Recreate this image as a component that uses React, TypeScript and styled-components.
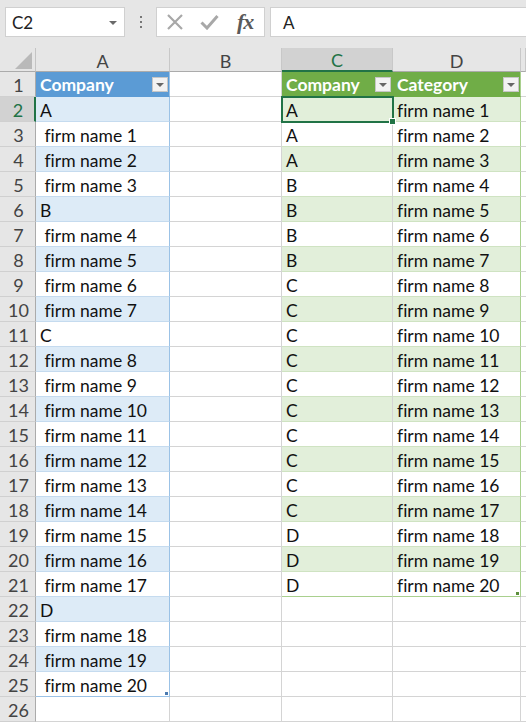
import React from "react";
import styled, { createGlobalStyle, css } from "styled-components";

const Global = createGlobalStyle`
  html, body { margin: 0; padding: 0; background: #ffffff; }
  body {
    font-family: Lato, "Open Sans", sans-serif;
    overflow: hidden;
    font-variant-ligatures: none;
    font-feature-settings: "liga" 0, "clig" 0;
  }
`;

const Page = styled.div`
  width: 526px;
  height: 723px;
  overflow: hidden;
  background: #fff;
`;

const TopBar = styled.div`
  height: 48px;
  box-sizing: border-box;
  background: #e6e6e6;
  display: flex;
  align-items: flex-start;
  padding: 7px 0 0 5px;
`;

const NameBox = styled.div`
  width: 120px;
  height: 30px;
  box-sizing: border-box;
  background: #fff;
  border: 1px solid #d0d0d0;
  display: flex;
  align-items: center;
  justify-content: space-between;
  padding: 1px 7px 0 6px;
  font-size: 17px;
  color: #222;
`;

const Caret = styled.span`
  width: 0;
  height: 0;
  border-left: 4px solid transparent;
  border-right: 4px solid transparent;
  border-top: 4px solid #6a6a6a;
`;

const Dots = styled.div`
  width: 31px;
  height: 30px;
  display: flex;
  flex-direction: column;
  align-items: center;
  justify-content: center;
  gap: 3px;
  span {
    width: 2px;
    height: 2px;
    background: #777;
  }
`;

const IconBox = styled.div`
  width: 109px;
  height: 30px;
  box-sizing: border-box;
  background: #fff;
  border: 1px solid #d0d0d0;
  display: flex;
  align-items: center;
  padding-left: 9px;
  gap: 16px;
`;

const Fx = styled.span`
  font-family: "Liberation Serif", "DejaVu Serif", serif;
  font-style: italic;
  font-weight: 700;
  font-size: 22px;
  color: #5a5a5a;
  margin-left: 2px;
  letter-spacing: -1px;
  line-height: 1;
`;

const FormulaInput = styled.div`
  flex: 1;
  height: 30px;
  margin-left: 5px;
  box-sizing: border-box;
  background: #fff;
  border: 1px solid #d0d0d0;
  border-right: none;
  display: flex;
  align-items: center;
  padding: 1px 0 0 12px;
  font-size: 17px;
  color: #222;
`;

const Sheet = styled.div`
  display: grid;
  grid-template-columns: 36px 134px 112px 111px 128px 5px;
  grid-template-rows: 24px;
  grid-auto-rows: 25px;
  font-size: 17.5px;
`;

const Corner = styled.div`
  background: #e6e6e6;
  border-right: 1px solid #c4c4c4;
  border-bottom: 1px solid #ababab;
  box-sizing: border-box;
  display: flex;
  align-items: flex-end;
  justify-content: flex-end;
  padding: 0 3px 2px 0;
  &::before {
    content: "";
    width: 0;
    height: 0;
    border-left: 17px solid transparent;
    border-bottom: 17px solid #b9b9b9;
  }
`;

const ColHead = styled.div<{ $sel?: boolean }>`
  box-sizing: border-box;
  background: ${(p) => (p.$sel ? "#d2d2d2" : "#e6e6e6")};
  color: ${(p) => (p.$sel ? "#217346" : "#444")};
  border-right: 1px solid #c8c8c8;
  border-bottom: ${(p) => (p.$sel ? "2px solid #217346" : "1px solid #ababab")};
  display: flex;
  align-items: center;
  justify-content: center;
  font-size: 18px;
  padding-top: 2px;
`;

const RowHead = styled.div<{ $sel?: boolean }>`
  box-sizing: border-box;
  background: ${(p) => (p.$sel ? "#d2d2d2" : "#e6e6e6")};
  color: ${(p) => (p.$sel ? "#217346" : "#444")};
  border-right: ${(p) => (p.$sel ? "2px solid #217346" : "1px solid #ababab")};
  border-bottom: 1px solid #d0d0d0;
  display: flex;
  align-items: center;
  justify-content: center;
  font-size: 18px;
  padding: 2px 0 0 2px;
`;

type Tone = "none" | "blue" | "green";

const palette = {
  blue: { head: "#5b9bd5", band: "#ddebf7", edge: "#9bc2e6", inner: "#c5dbef", handle: "#4a7ab0" },
  green: { head: "#70ad47", band: "#e2efda", edge: "#a9d08e", inner: "#cfe3c2", handle: "#5d8f3c" },
};

const Cell = styled.div<{
  $tone: Tone;
  $head?: boolean;
  $band?: boolean;
  $edgeRight?: boolean;
  $last?: boolean;
  $selected?: boolean;
  $handle?: boolean;
}>`
  position: relative;
  box-sizing: border-box;
  display: flex;
  align-items: center;
  justify-content: space-between;
  padding: 2px 1px 0 4px;
  white-space: pre;
  color: #111;
  background: #fff;
  border-right: 1px solid #d4d4d4;
  border-bottom: 1px solid #d4d4d4;
  ${(p) => {
    if (p.$tone === "none") return "";
    const c = palette[p.$tone];
    if (p.$head)
      return css`
        background: ${c.head};
        color: #fff;
        font-weight: 700;
        padding-top: 1px;
        border-bottom-color: ${c.head};
        border-right-color: ${p.$edgeRight ? c.edge : c.head};
      `;
    return css`
      background: ${p.$band ? c.band : "#fff"};
      border-bottom-color: ${p.$last ? c.edge : c.inner};
      border-right-color: ${p.$edgeRight ? c.edge : "#d4d4d4"};
    `;
  }}
  ${(p) =>
    p.$handle &&
    p.$tone !== "none" &&
    css`
      &::before {
        content: "";
        position: absolute;
        right: 1px;
        bottom: 1px;
        width: 3px;
        height: 3px;
        background: ${palette[p.$tone].handle};
      }
    `}
  ${(p) =>
    p.$selected &&
    css`
      z-index: 2;
      outline: 2px solid #217346;
      outline-offset: -1px;
      &::after {
        content: "";
        position: absolute;
        right: -4px;
        bottom: -4px;
        width: 5px;
        height: 5px;
        background: #217346;
        border: 1px solid #fff;
      }
    `}
`;

const FilterBtn = styled.span`
  width: 16px;
  height: 15px;
  box-sizing: border-box;
  background: #f2f2f2;
  border: 1px solid #c6c6c6;
  display: flex;
  align-items: center;
  justify-content: center;
  &::before {
    content: "";
    width: 0;
    height: 0;
    border-left: 4px solid transparent;
    border-right: 4px solid transparent;
    border-top: 4px solid #666;
  }
`;

const leftData: string[] = [
  "A", " firm name 1", " firm name 2", " firm name 3",
  "B", " firm name 4", " firm name 5", " firm name 6", " firm name 7",
  "C", " firm name 8", " firm name 9", " firm name 10", " firm name 11", " firm name 12",
  " firm name 13", " firm name 14", " firm name 15", " firm name 16", " firm name 17",
  "D", " firm name 18", " firm name 19", " firm name 20",
];

const rightCat: string[] = [
  "A", "A", "A", "B", "B", "B", "B",
  "C", "C", "C", "C", "C", "C", "C", "C", "C", "C",
  "D", "D", "D",
];

const XIcon = () => (
  <svg width="18" height="18" viewBox="0 0 18 18">
    <path d="M2 2 L16 16 M16 2 L2 16" stroke="#a8a8a8" strokeWidth="2.2" fill="none" />
  </svg>
);

const CheckIcon = () => (
  <svg width="19" height="16" viewBox="0 0 19 16">
    <path d="M1.5 8.5 L7 14 L17.5 2" stroke="#a8a8a8" strokeWidth="3" fill="none" />
  </svg>
);

export default function App() {
  const rows: React.ReactNode[] = [];
  for (let r = 1; r <= 26; r++) {
    const sel = r === 2;
    rows.push(
      <RowHead key={`rh${r}`} $sel={sel}>
        {r}
      </RowHead>
    );
    if (r === 1) {
      rows.push(
        <Cell key={`a${r}`} $tone="blue" $head $edgeRight>
          Company
          <FilterBtn />
        </Cell>
      );
    } else if (r <= 25) {
      rows.push(
        <Cell
          key={`a${r}`}
          $tone="blue"
          $band={r % 2 === 0}
          $edgeRight
          $last={r === 25}
          $handle={r === 25}
        >
          {leftData[r - 2]}
        </Cell>
      );
    } else {
      rows.push(<Cell key={`a${r}`} $tone="none" />);
    }
    rows.push(<Cell key={`b${r}`} $tone="none" />);
    if (r === 1) {
      rows.push(
        <Cell key={`c${r}`} $tone="green" $head>
          Company
          <FilterBtn />
        </Cell>
      );
      rows.push(
        <Cell key={`d${r}`} $tone="green" $head $edgeRight>
          Category
          <FilterBtn />
        </Cell>
      );
    } else if (r <= 21) {
      rows.push(
        <Cell key={`c${r}`} $tone="green" $band={r % 2 === 0} $last={r === 21} $selected={r === 2}>
          {rightCat[r - 2]}
        </Cell>
      );
      rows.push(
        <Cell
          key={`d${r}`}
          $tone="green"
          $band={r % 2 === 0}
          $last={r === 21}
          $edgeRight
          $handle={r === 21}
        >
          {`firm name ${r - 1}`}
        </Cell>
      );
    } else {
      rows.push(<Cell key={`c${r}`} $tone="none" />);
      rows.push(<Cell key={`d${r}`} $tone="none" />);
    }
    rows.push(<Cell key={`e${r}`} $tone="none" />);
  }

  return (
    <Page>
      <Global />
      <TopBar>
        <NameBox>
          C2
          <Caret />
        </NameBox>
        <Dots>
          <span />
          <span />
          <span />
        </Dots>
        <IconBox>
          <XIcon />
          <CheckIcon />
          <Fx>fx</Fx>
        </IconBox>
        <FormulaInput>A</FormulaInput>
      </TopBar>
      <Sheet>
        <Corner />
        <ColHead>A</ColHead>
        <ColHead>B</ColHead>
        <ColHead $sel>C</ColHead>
        <ColHead>D</ColHead>
        <ColHead />
        {rows}
      </Sheet>
    </Page>
  );
}
